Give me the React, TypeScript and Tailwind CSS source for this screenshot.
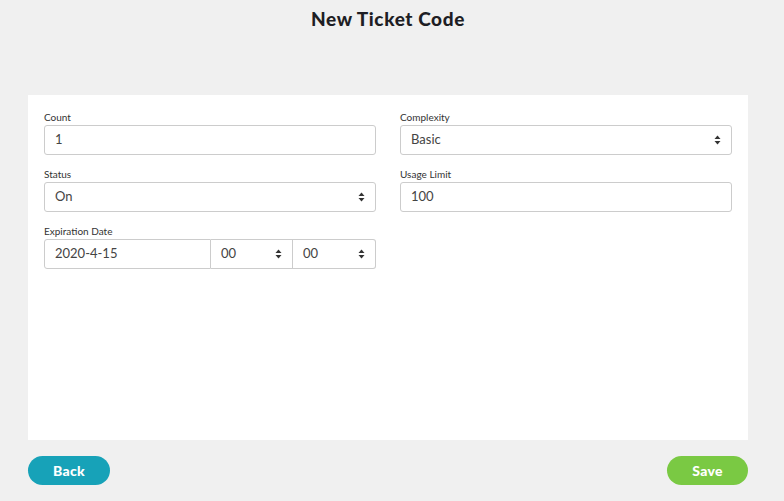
const font = { fontFamily: "Lato, 'Open Sans', sans-serif" };

function Caret() {
  return (
    <svg width="7" height="10" viewBox="0 0 7 10" className="shrink-0">
      <path d="M3.5 0.5 L6.5 4 L0.5 4 Z" fill="#333" />
      <path d="M3.5 9.5 L6.5 6 L0.5 6 Z" fill="#333" />
    </svg>
  );
}

function Field({ label, children }: { label: string; children: React.ReactNode }) {
  return (
    <div className="flex flex-col">
      <label className="text-[10px] leading-[12px] text-[#333] mb-[2px]">{label}</label>
      {children}
    </div>
  );
}

function TextBox({ value }: { value: string }) {
  return (
    <div className="h-[30px] border border-[#ccc] rounded-[3px] px-[10px] flex items-center text-[13px] text-[#444] bg-white">
      {value}
    </div>
  );
}

function SelectBox({ value }: { value: string }) {
  return (
    <div className="h-[30px] border border-[#ccc] rounded-[3px] px-[10px] flex items-center justify-between text-[13px] text-[#444] bg-white">
      <span>{value}</span>
      <Caret />
    </div>
  );
}

export default function App() {
  return (
    <div className="w-[784px] h-[501px] bg-[#f0f0f0] flex flex-col" style={font}>
      <h1 className="text-center text-[19px] font-black text-[#1e1e24] pt-[5px] h-[95px] pr-[8px] tracking-[0.6px]">
        New Ticket Code
      </h1>
      <div className="ml-[28px] mr-[36px] h-[345px] bg-white p-[16px]">
        <div className="grid grid-cols-2 gap-x-[24px] gap-y-[13px]">
          <Field label="Count"><TextBox value="1" /></Field>
          <Field label="Complexity"><SelectBox value="Basic" /></Field>
          <Field label="Status"><SelectBox value="On" /></Field>
          <Field label="Usage Limit"><TextBox value="100" /></Field>
          <Field label="Expiration Date">
            <div className="flex h-[30px]">
              <div className="w-[167px] border border-[#ccc] rounded-l-[3px] px-[10px] flex items-center text-[13px] text-[#444]">2020-4-15</div>
              <div className="w-[82px] border-y border-r border-[#ccc] px-[10px] flex items-center justify-between text-[13px] text-[#444]">
                <span>00</span>
                <Caret />
              </div>
              <div className="flex-1 border-y border-r border-[#ccc] rounded-r-[3px] px-[10px] flex items-center justify-between text-[13px] text-[#444]">
                <span>00</span>
                <Caret />
              </div>
            </div>
          </Field>
        </div>
      </div>
      <div className="flex justify-between ml-[28px] mr-[36px] mt-[16px]">
        <button className="w-[82px] h-[29px] rounded-full bg-[#17a2b8] text-white font-black text-[14px] tracking-[0.3px]">Back</button>
        <button className="w-[81px] h-[29px] rounded-full bg-[#7ac943] text-white font-black text-[14px] tracking-[0.3px]">Save</button>
      </div>
    </div>
  );
}
